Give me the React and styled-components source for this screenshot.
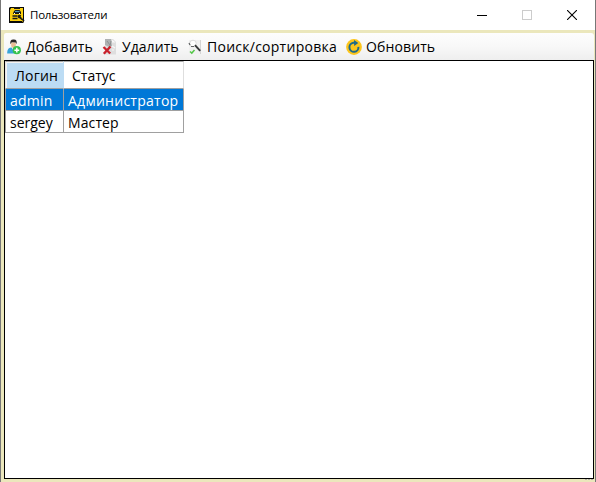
import React from 'react';
import styled, { createGlobalStyle } from 'styled-components';

const Global = createGlobalStyle`
  * { box-sizing: border-box; }
  html, body { margin: 0; overflow: hidden; }
  body { font-family: "Open Sans", "Noto Sans", sans-serif; color: #000; }
`;

const Window = styled.div`
  width: 596px;
  height: 482px;
  display: flex;
  flex-direction: column;
  background: #fff;
  border-left: 1px solid #777;
  border-right: 1px solid #777;
`;

const TitleBar = styled.header`
  height: 30px;
  flex: none;
  display: flex;
  align-items: center;
  padding-left: 8px;
`;

const Title = styled.span`
  flex: 1;
  margin-left: 5px;
  font-size: 11.5px;
  line-height: 30px;
  height: 30px;
  letter-spacing: ${(p) => p.$track}px;
  white-space: nowrap;
`;

const CaptionButton = styled.button`
  width: ${(p) => p.$width || 45}px;
  height: 29px;
  flex: none;
  padding: 0;
  border: 0;
  background: none;
  display: flex;
  align-items: center;
  justify-content: center;
`;

const Body = styled.div`
  flex: 1;
  display: flex;
  flex-direction: column;
  padding: 3px 1px 0 3px;
  background: #ebe7bc;
`;

const ToolBar = styled.nav`
  height: 27px;
  flex: none;
  display: flex;
  align-items: center;
  padding-left: 2px;
  border-radius: 2px 3px 0 0;
  background: linear-gradient(#fdfdfd, #f8f8f8 50%, #eeeeee);
`;

const Tool = styled.button`
  width: ${(p) => p.$width}px;
  height: 27px;
  flex: none;
  display: flex;
  align-items: center;
  gap: 4px;
  padding: 0;
  border: 0;
  background: none;
  color: #000;
  font: 14px/27px "Open Sans", "Noto Sans", sans-serif;
  letter-spacing: ${(p) => p.$track}px;
  white-space: nowrap;
  svg { flex: none; }
`;

const Content = styled.main`
  flex: 1;
  border: 1px solid #000;
  background: #fff;
`;

const GripBar = styled.footer`
  height: 3px;
  flex: none;
  display: flex;
  justify-content: flex-end;
  gap: 1px;
  padding-right: 1px;
`;

const GripDot = styled.span`
  width: 2px;
  height: 1px;
  background: #b5b2a8;
`;

const Grid = styled.div`
  width: 179px;
  display: grid;
  grid-template-columns: 59px 120px;
  grid-template-rows: 28px 22px 22px;
  font-size: 14px;
`;

const HeadCell = styled.div`
  padding-left: ${(p) => p.$pad}px;
  line-height: 28px;
  border-top: 1px solid #a6a6a6;
  border-right: 1px solid ${(p) => (p.$active ? '#bcdcf4' : '#dedede')};
  border-left: ${(p) => (p.$active ? '1px solid #e6e6e6' : '0')};
  border-bottom: 1px solid #a0a0a0;
  background: ${(p) => (p.$active ? '#bcdcf4' : '#fff')};
  box-shadow: ${(p) => (p.$active ? 'inset 1px 1px #f4f4f4' : 'none')};
  letter-spacing: ${(p) => p.$track}px;
  white-space: nowrap;
`;

const Cell = styled.div`
  padding-left: 4px;
  line-height: 23px;
  border-right: 1px solid #a0a0a0;
  border-bottom: 1px solid #a0a0a0;
  border-left: ${(p) => (p.$first ? '1px solid #a0a0a0' : '0')};
  background: ${(p) => (p.$selected ? '#0078d7' : '#fff')};
  color: ${(p) => (p.$selected ? '#fff' : '#000')};
  letter-spacing: ${(p) => p.$track || 0}px;
  white-space: nowrap;
`;

const AppIcon = () => (
  <svg width="16" height="16" viewBox="0 0 16 16">
    <path d="M0 1l1-1h14v15l-1 1H0z" fill="#090909" />
    <path d="M2 1h12v13H1V3z" fill="#fbd00e" />
    <path d="M5 0h6v2H5zM4.5 5L6 3h4.5L12 5v2H4z" fill="#171717" />
    <path d="M6 4.5h4.5" stroke="#4c9ab8" strokeWidth="1.2" />
    <path d="M5 6.5h1M10 6.5h1" stroke="#fff" />
    <path d="M3.5 9h5M3.5 11.5h5" stroke="#171717" strokeWidth="1.3" />
    <path d="M9 8.5l6 5.5M9.5 11l2-3" stroke="#171717" strokeWidth="1.8" />
    <path d="M12 13.2l2.2 1.3M12.5 10.8l1 .8" stroke="#fbd00e" />
  </svg>
);

const AddUserIcon = () => (
  <svg width="16" height="16" viewBox="0 0 16 16">
    <path d="M1.2 14.5c0-4 1-5.5 4-6h4c3 .5 4 2 4 6z" fill="#39a5da" />
    <path d="M5.5 8l1.6 3L9 8z" fill="#fff" />
    <path d="M5.2 3.5h4.6v3c0 1.3-.9 2.5-2.3 2.5S5.2 7.8 5.2 6.5z" fill="#e9bd94" />
    <path d="M4.5 5.2c-.8-3 .5-5 3-4.8 2.7-.2 3.8 1.5 3 4.8l-.8-1.6-4-.4z" fill="#292725" />
    <circle cx="10.8" cy="11.2" r="4.1" fill="#36c34d" />
    <path d="M10.8 8.8v4.8M8.4 11.2h4.8" stroke="#fff" strokeWidth="1.5" />
  </svg>
);

const DeleteIcon = () => (
  <svg width="16" height="16" viewBox="0 0 16 16">
    <path d="M3 0h8l3 3v12.5H3z" fill="#dedede" />
    <path d="M3 0h6l1 7-3 1-4-2z" fill="#aeb1b2" />
    <path d="M5 2l3 4M9 2l-1 5" stroke="#8e9192" />
    <path d="M10 .5l3.5 3H10z" fill="#f8f8f8" />
    <path d="M10 7l3 2M10 11h2" stroke="#f7f7f7" strokeWidth="1.2" />
    <path d="M1.5 8l6.7 6.5M8.5 7.5L1.8 14.7" stroke="#c9222c" strokeWidth="2.4" />
  </svg>
);

const SearchIcon = () => (
  <svg width="16" height="16" viewBox="0 0 16 16">
    <path d="M2 1h12v14H2z" fill="#f1f1f1" />
    <path d="M13.5 1v14" stroke="#d4d4d4" />
    <circle cx="6" cy="4.5" r="3.3" fill="#fff" stroke="#dcdcdc" />
    <path d="M2 4l1 2M4 7.5h3" stroke="#606263" strokeWidth="1.2" />
    <path d="M8 6.2l5.2 5.6" stroke="#37393a" strokeWidth="1.9" />
    <path d="M3 12.5l1.8 1.6 2.7-3" fill="none" stroke="#54c748" strokeWidth="1.5" />
  </svg>
);

const RefreshIcon = () => (
  <svg width="16" height="16" viewBox="0 0 16 16">
    <circle cx="8" cy="8" r="7.9" fill="#fdc51b" />
    <path d="M8.8 3.8H7.4a4.5 4.5 0 1 0 5 4" fill="none" stroke="#216b88" strokeWidth="2" />
    <path d="M8 .9l4.3 3L8.2 7z" fill="#216b88" />
  </svg>
);

const tools = [
  { label: 'Добавить', Icon: AddUserIcon, width: 96, track: 0.12 },
  { label: 'Удалить', Icon: DeleteIcon, width: 85, track: 0.05 },
  { label: 'Поиск/сортировка', Icon: SearchIcon, width: 159, track: 0.26 },
  { label: 'Обновить', Icon: RefreshIcon, width: 94, track: 0.12 },
];

export default function App() {
  return (
    <>
      <Global />
      <Window>
        <TitleBar>
          <AppIcon />
          <Title $track={-0.22}>Пользователи</Title>
          <CaptionButton $width={46} aria-label="Свернуть">
            <svg width="10" height="10"><path d="M0 5.5h10" stroke="#000" /></svg>
          </CaptionButton>
          <CaptionButton $width={44} aria-label="Развернуть">
            <svg width="10" height="10" shapeRendering="crispEdges"><path d="M.5 .5h9v9h-9z" fill="none" stroke="#ccc" /></svg>
          </CaptionButton>
          <CaptionButton $width={46} aria-label="Закрыть">
            <svg width="10" height="10"><path d="M0 0l10 10M10 0l-10 10" stroke="#000" strokeWidth="1.1" /></svg>
          </CaptionButton>
        </TitleBar>
        <Body>
          <ToolBar>
            {tools.map(({ label, Icon, width, track }) => (
              <Tool key={label} $width={width} $track={track}>
                <Icon />
                {label}
              </Tool>
            ))}
          </ToolBar>
          <Content>
            <Grid>
              <HeadCell $active $pad={9} $track={0.2}>Логин</HeadCell>
              <HeadCell $pad={8} $track={0}>Статус</HeadCell>
              <Cell $first $selected $track={0.2}>admin</Cell>
              <Cell $selected $track={0.26}>Администратор</Cell>
              <Cell $first>sergey</Cell>
              <Cell $track={0.1}>Мастер</Cell>
            </Grid>
          </Content>
          <GripBar>
            <GripDot />
            <GripDot />
            <GripDot />
          </GripBar>
        </Body>
      </Window>
    </>
  );
}
